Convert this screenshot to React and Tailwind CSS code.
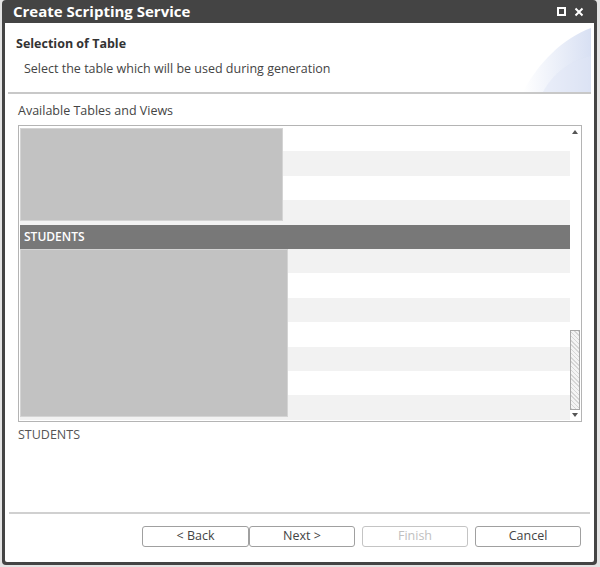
import React from 'react';

const font = { fontFamily: '"Open Sans", "Noto Sans", sans-serif' };

// 12 rows, index 4 is the selected one
const rows = Array.from({ length: 12 }, (_, i) => ({
  id: i,
  label: i === 4 ? 'STUDENTS' : '',
  selected: i === 4,
}));

function Scrollbar() {
  return (
    <div className="w-[10px] flex flex-col items-center bg-white">
      <svg width="8" height="8" viewBox="0 0 8 8" className="mt-[1px]">
        <path d="M1 6 L4 2 L7 6 Z" fill="#555" />
      </svg>
      <div className="flex-1" />
      <div
        className="w-[10px] h-[80px] border border-[#a8a8a8]"
        style={{
          backgroundImage:
            'repeating-linear-gradient(45deg, #d6d6d6 0 1px, #f4f4f4 1px 3px)',
        }}
      />
      <svg width="8" height="8" viewBox="0 0 8 8" className="mb-[1px] mt-[1px]">
        <path d="M1 2 L4 6 L7 2 Z" fill="#555" />
      </svg>
    </div>
  );
}

export default function App() {
  return (
    <div className="w-[600px] h-[567px] bg-[#e4e4e4] pl-[2px]" style={font}>
      <div className="w-[595px] h-[565px] bg-[#444444] rounded-[4px] px-[3px] pb-[3px] flex flex-col">
        {/* Title bar */}
        <div className="h-[23px] flex items-center justify-between pl-[8px] pr-[10px]">
          <span className="text-white font-bold text-[15px] leading-none">Create Scripting Service</span>
          <div className="flex items-center gap-[8px]">
            <span className="w-[9px] h-[9px] border-2 border-white inline-block" />
            <svg width="10" height="10" viewBox="0 0 10 10">
              <path d="M1.5 1.5 L8.5 8.5 M8.5 1.5 L1.5 8.5" stroke="white" strokeWidth="2" />
            </svg>
          </div>
        </div>

        <div className="flex-1 bg-white rounded-b-[2px] flex flex-col">
          {/* Header */}
          <div className="relative mx-[3px] h-[71px] border-b-2 border-[#c8c8c8] overflow-hidden">
            <svg className="absolute right-0 top-[5px]" width="68" height="64" viewBox="0 0 68 64">
              <defs>
                <linearGradient id="g" x1="0" y1="0" x2="1" y2="0">
                  <stop offset="0" stopColor="#ffffff" />
                  <stop offset="1" stopColor="#d8e0f3" />
                </linearGradient>
              </defs>
              <path d="M0 64 C 15 35, 40 10, 68 0 L68 64 Z" fill="url(#g)" />
              <path d="M20 64 C 30 45, 48 32, 68 28 L68 64 Z" fill="#dfe5f5" opacity="0.5" />
            </svg>
            <div className="relative pl-[8px] pt-[12px]">
              <div className="text-[12.5px] font-bold text-[#333]">Selection of Table</div>
              <div className="text-[12.5px] text-[#444] pl-[8px] mt-[6px]">
                Select the table which will be used during generation
              </div>
            </div>
          </div>

          {/* Body */}
          <div className="pl-[13px] pr-[12px] flex flex-col">
            <div className="text-[12.5px] text-[#444] mt-[9px] leading-[16px]">Available Tables and Views</div>
            <div className="mt-[6px] h-[297px] border border-[#b4b4b4] p-px flex">
              <div className="relative flex-1 flex flex-col">
                {rows.map(r => (
                  <div
                    key={r.id}
                    className={`h-[24.4px] flex items-center pl-[4px] text-[12px] ${
                      r.selected
                        ? 'bg-[#787878] text-white font-semibold'
                        : r.id % 2 === 1
                        ? 'bg-[#f2f2f2]'
                        : 'bg-white'
                    }`}
                  >
                    {r.label}
                  </div>
                ))}
                <div className="absolute left-0 top-[1px] w-[263px] h-[93px] bg-[#c2c2c2] border border-[#d4d4d4]" />
                <div className="absolute left-0 top-[122px] w-[268px] h-[168px] bg-[#c2c2c2] border border-[#d4d4d4]" />
              </div>
              <Scrollbar />
            </div>
            <div className="text-[12.5px] text-[#555] mt-[5px] leading-[16px]">STUDENTS</div>
          </div>

          <div className="flex-1" />

          {/* Footer */}
          <div className="mx-[4px] border-t-2 border-[#d0d0d0] flex justify-end pr-[9px] pt-[12px] pb-[15px]">
            <div className="flex">
              <button className="w-[107px] h-[21px] border border-[#a0a0a0] rounded-[3px] bg-white text-[12.5px] text-[#444]">&lt; Back</button>
              <button className="w-[106px] h-[21px] border border-[#a0a0a0] rounded-[3px] bg-white text-[12.5px] text-[#444]">Next &gt;</button>
              <button className="ml-[7px] w-[106px] h-[21px] border border-[#c4c4c4] rounded-[3px] bg-white text-[12.5px] text-[#c0c0c0]">Finish</button>
              <button className="ml-[7px] w-[106px] h-[21px] border border-[#a0a0a0] rounded-[3px] bg-white text-[12.5px] text-[#444]">Cancel</button>
            </div>
          </div>
        </div>
      </div>
    </div>
  );
}
